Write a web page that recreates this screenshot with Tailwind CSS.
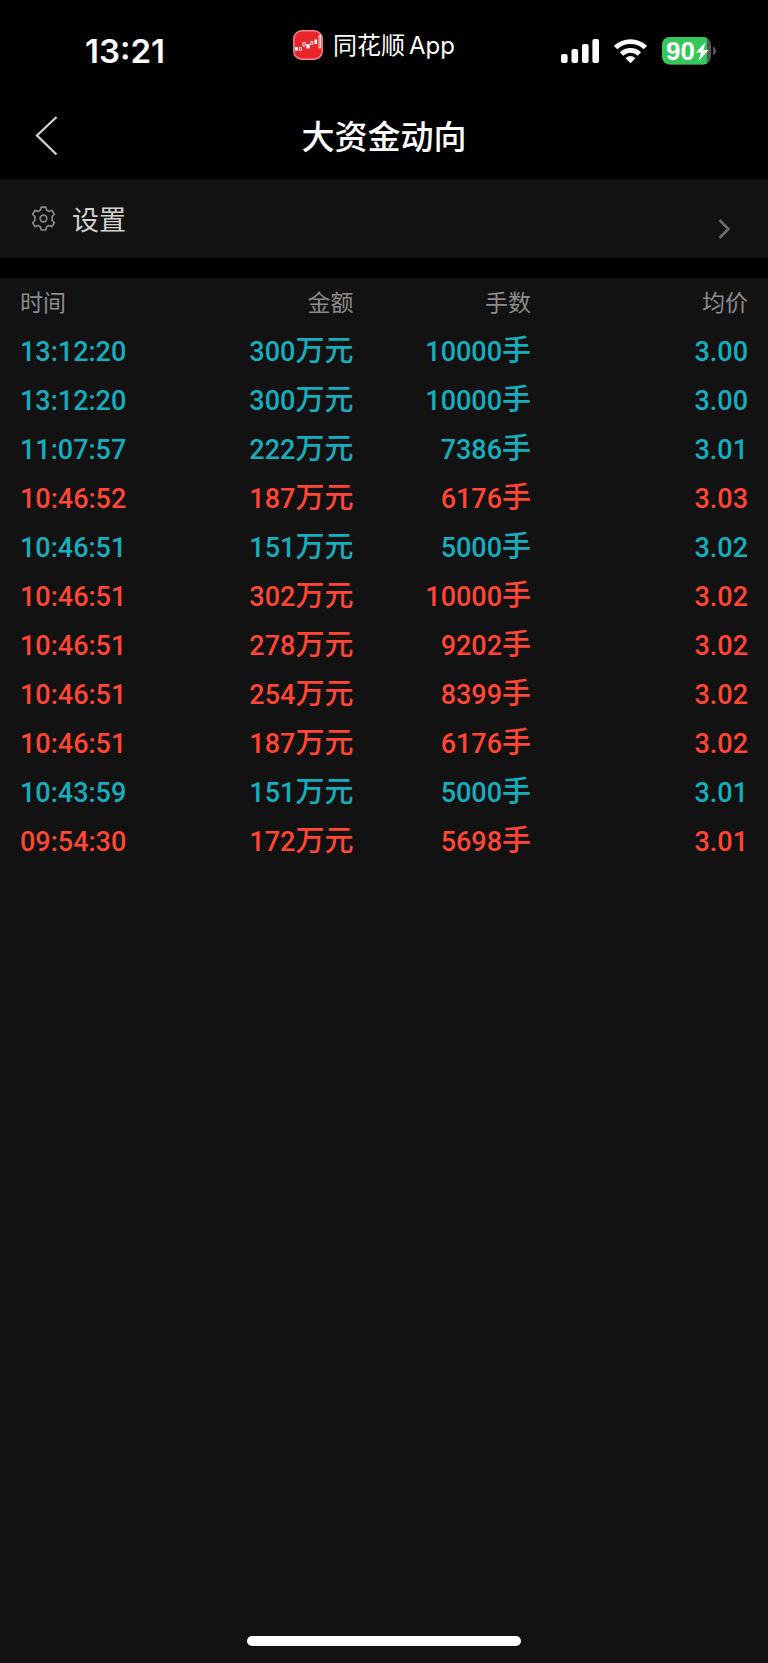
<!DOCTYPE html>
<html lang="zh-CN">
<head>
<meta charset="utf-8">
<meta name="viewport" content="width=device-width, initial-scale=1">
<title>大资金动向</title>
<script src="https://cdn.jsdelivr.net/npm/@tailwindcss/browser@4"></script>
</head>
<body class="bg-black">
<div class="flex min-h-screen flex-col bg-black font-['Inter','Noto_Sans_CJK_SC',sans-serif] text-white">
  <div class="grid h-[93px] grid-cols-3">
    <div class="flex items-center pt-2 pl-[85px] text-[33px] leading-10 font-semibold">13:21</div>
    <div class="flex items-center justify-center gap-2.5 pr-5 pb-1 text-2xl whitespace-nowrap">
      <svg class="size-[30px] shrink-0" viewBox="0 0 30 30" aria-hidden="true">
        <rect x=".8" y=".8" width="28.4" height="28.4" rx="8" fill="#e8262b" stroke="#f58a8a" stroke-width="1.4"/>
        <g fill="#fff"><path d="M2 17h3v3.500H2zM13.500 14h3.200v4.500h-3.200zM21.500 9.500h2.500v4.500h-2.500z"/></g>
        <g fill="none" stroke="#fff" stroke-width=".9"><path d="M6.500 17.500h2v3h-2zM10 12.500h2.200v3.500H10zM17.800 11.500h2v3h-2zM26 5.500h1.600v12.500H26z"/></g>
      </svg>
      <span class="flex gap-1 pt-0.5"><span>同花顺</span><span>App</span></span>
    </div>
    <div class="flex items-center justify-end gap-[15px] pt-2 pr-[52px]">
      <svg class="h-6 w-[38px]" viewBox="0 0 38 24" fill="#fff" role="img" aria-label="信号">
        <rect x="0" y="15" width="6.600" height="9" rx="2"/><rect x="10.500" y="10" width="6.600" height="14" rx="2"/><rect x="21" y="5" width="6.600" height="19" rx="2"/><rect x="31.400" y="0" width="6.600" height="24" rx="2"/>
      </svg>
      <svg class="h-6 w-[33px]" viewBox="0 0 33 24" role="img" aria-label="Wi-Fi">
        <g fill="none" stroke="#fff" stroke-width="4.800"><path d="M1.600 8.600a21.500 21.500 0 0 1 29.800 0"/><path d="M7.600 14.900a13 13 0 0 1 17.800 0"/></g>
        <path d="M16.500 24.200l-4.900-5q4.900-4.200 9.800 0z" fill="#fff"/>
      </svg>
      <svg class="h-7 w-[54px]" viewBox="0 0 54 28" role="img" aria-label="电量 90%">
        <clipPath id="b"><rect width="49" height="27.500" rx="8"/></clipPath>
        <g clip-path="url(#b)"><rect width="49" height="28" fill="#555"/><rect width="45" height="28" fill="#34c759"/></g>
        <path d="M51 9.500q3 1.500 3 4.500t-3 4.500z" fill="#555"/>
        <text x="4" y="23" font-family="Liberation Sans" font-size="26" font-weight="700" fill="#fff">90</text>
        <path d="M43.500 5L34 15.500h5L36.500 24l10-11h-5z" fill="#fff"/>
      </svg>
    </div>
  </div>
  <header class="grid h-[86px] grid-cols-[1fr_auto_1fr] items-center">
    <button type="button" aria-label="返回" class="ml-8 w-8">
      <svg class="h-10 w-[26px]" viewBox="0 0 26 40" fill="none" stroke="#ccc" stroke-width="2.400"><path d="M24.500 1L5 19.500l19.500 19"/></svg>
    </button>
    <h1 class="pt-0.5 text-[33px] leading-10 font-medium">大资金动向</h1>
  </header>
  <button type="button" class="flex h-[79px] items-center bg-[#121212] pr-[38px] pl-[31px] text-left">
    <svg class="size-[25px]" viewBox="0 0 24 24" fill="none" stroke="#8a8a8a" stroke-width="1.600" stroke-linejoin="round" aria-hidden="true">
      <path d="M9.800 1h4.400l.7 2.900 2.300 1.300 3-1 2.200 3.700-2.100 2.300v3.600l2.100 2.300-2.200 3.700-3-1-2.300 1.300-.7 2.900H9.800l-.7-2.900-2.300-1.300-3 1-2.200-3.700 2.100-2.300v-3.600L1.600 7.900l2.200-3.700 3 1 2.300-1.300z"/><circle cx="12" cy="12" r="3.200"/>
    </svg>
    <span class="pt-1 ml-4 text-[27px] leading-10 text-[#d2d2d2]">设置</span>
    <svg class="mt-5 ml-auto h-5 w-3" viewBox="0 0 12 20" fill="none" stroke="#6e6e6e" stroke-width="2.500"><path d="M1.500 1l9 9-9 9"/></svg>
  </button>
  <main class="mt-5 flex grow flex-col bg-[#121212]">
    <div class="grow px-5">
      <table class="w-full table-fixed text-right">
        <thead>
          <tr class="h-[49px] text-[23px] leading-8 text-[#8c8c8c]">
            <th scope="col" class="w-[22%] text-left font-normal">时间</th><th scope="col" class="w-[23.8%] font-normal">金额</th><th scope="col" class="w-[24.4%] font-normal">手数</th><th scope="col" class="w-[29.8%] font-normal">均价</th>
          </tr>
        </thead>
        <tbody id="trades" class="font-['Roboto','Noto_Sans_CJK_SC',sans-serif] text-[27px] leading-10 font-medium"></tbody>
      </table>
    </div>
    <div class="mx-auto mb-[17px] h-2.5 w-[274px] rounded-full bg-white"></div>
  </main>
</div>
<script>
const trades = [
  ['13:12:20', 300, 10000, '3.00', 0],
  ['13:12:20', 300, 10000, '3.00', 0],
  ['11:07:57', 222, 7386, '3.01', 0],
  ['10:46:52', 187, 6176, '3.03', 1],
  ['10:46:51', 151, 5000, '3.02', 0],
  ['10:46:51', 302, 10000, '3.02', 1],
  ['10:46:51', 278, 9202, '3.02', 1],
  ['10:46:51', 254, 8399, '3.02', 1],
  ['10:46:51', 187, 6176, '3.02', 1],
  ['10:43:59', 151, 5000, '3.01', 0],
  ['09:54:30', 172, 5698, '3.01', 1],
];
document.getElementById('trades').innerHTML = trades.map(([time, amount, lots, price, buy]) =>
  `<tr class="h-[49px] ${buy ? 'text-[#ff4533]' : 'text-[#16aebd]'}"><td class="text-left">${time}</td><td>${amount}<span class="text-[29px]">万元</span></td><td>${lots}<span class="text-[29px]">手</span></td><td>${price}</td></tr>`
).join('');
</script>
</body>
</html>
